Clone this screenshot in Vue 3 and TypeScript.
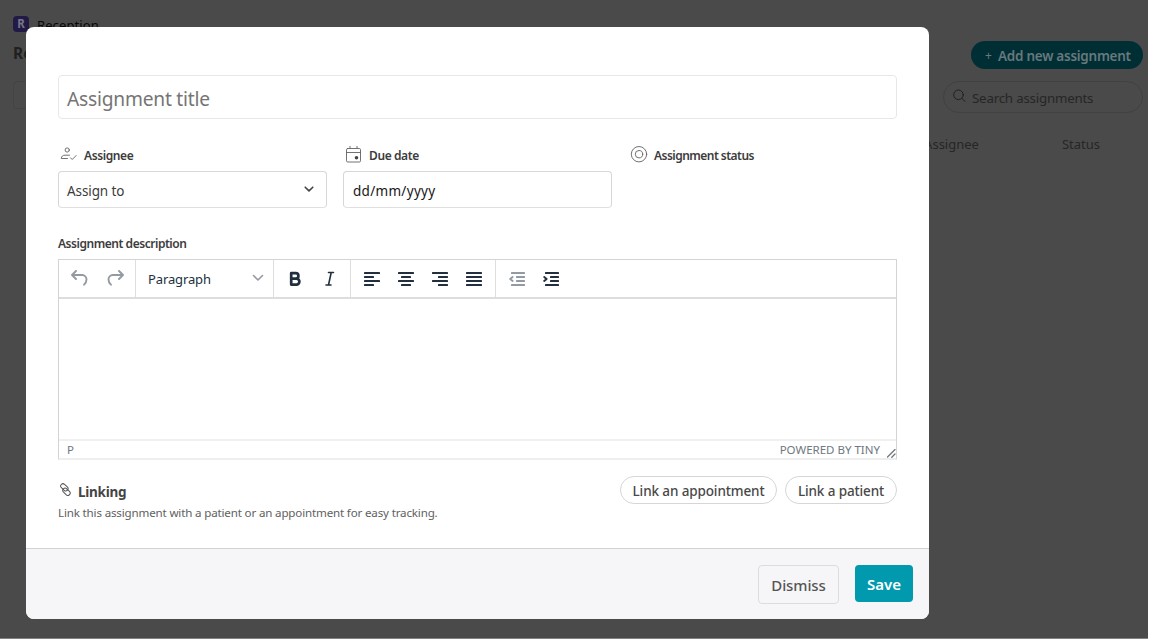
<script setup lang="ts">
interface Bar { x: number; w: number; y: number }

const rows = [1, 5, 9, 13]
const makeBars = (spec: [number, number][]): Bar[] =>
  spec.map(([x, w], i) => ({ x, w, y: rows[i] }))

const alignIcons: { name: string; bars: Bar[] }[] = [
  { name: 'Align left', bars: makeBars([[0, 16], [0, 10], [0, 16], [0, 10]]) },
  { name: 'Align center', bars: makeBars([[0, 16], [3, 10], [0, 16], [3, 10]]) },
  { name: 'Align right', bars: makeBars([[0, 16], [6, 10], [0, 16], [6, 10]]) },
  { name: 'Justify', bars: makeBars([[0, 16], [0, 16], [0, 16], [0, 16]]) },
]
const indentBars = makeBars([[2, 14], [7, 9], [7, 9], [2, 14]])
</script>

<template>
  <div class="screen">
    <div class="page">
      <div class="brand"><span class="logo">R</span><span class="t brand-name">Reception</span></div>
      <div class="heading-row">
        <span class="t heading">Reception</span>
        <span class="add"><span class="plus">+</span><span class="t add-text">Add new assignment</span></span>
      </div>
      <div class="filter-row">
        <span class="filter"></span>
        <span class="search">
          <svg width="14" height="14" viewBox="0 0 14 14"><circle cx="5.500" cy="5.800" r="4.800" /><path d="M9 9.400 12 12.500" /></svg>
          <span class="t search-text">Search assignments</span>
        </span>
      </div>
      <div class="columns"><span class="t col-a">Assignee</span><span class="t col-s">Status</span></div>
    </div>

    <div class="modal">
      <div class="body">
        <div class="title-input"><span class="t title-text">Assignment title</span></div>

        <div class="fields">
          <div class="field">
            <div class="label">
              <svg class="ic person" width="20" height="18" viewBox="0 0 20 18"><circle cx="9.200" cy="4" r="2.100" /><path d="M11.500 9.200H7C4.800 9.200 3.500 10.300 3.300 12.500h6.200M12.500 11.800l1.700 1.700 4-4" /></svg>
              <span class="t l-assignee">Assignee</span>
            </div>
            <div class="control">
              <span class="t c-assign">Assign to</span>
              <svg class="chev" width="10" height="7" viewBox="0 0 10 7"><path d="M1.200 1.200 5 4.900 8.800 1.200" /></svg>
            </div>
          </div>
          <div class="field">
            <div class="label">
              <svg class="ic" width="20" height="18" viewBox="0 0 20 18"><rect x="3.500" y="2.500" width="14" height="13.500" rx="1.200" /><path d="M3.500 6.500h14M7 .3v2.200M14 .3v2.200" /><circle cx="13.500" cy="11.700" r="1.800" class="dot" /></svg>
              <span class="t l-due">Due date</span>
            </div>
            <div class="control"><span class="t c-date">dd/mm/yyyy</span></div>
          </div>
          <div class="field">
            <div class="label">
              <svg class="ic" width="20" height="18" viewBox="0 0 20 18"><circle cx="11" cy="8.200" r="7.700" /><circle cx="11" cy="8.200" r="3.700" /></svg>
              <span class="t l-status">Assignment status</span>
            </div>
          </div>
        </div>

        <div class="desc"><span class="t l-desc">Assignment description</span></div>

        <div class="editor">
          <div class="toolbar">
            <div class="group history">
              <svg width="18" height="17" viewBox="0 0 18 17"><path d="M5 1 1 5 5 9M1.500 5h9.700a4.400 4.400 0 0 1 4.300 4.400c0 2.200-1 3.800-2.400 5.300" /></svg>
              <svg width="18" height="17" viewBox="0 0 18 17"><path d="M13 1l4 4-4 4M16.500 5H6.800a4.400 4.400 0 0 0-4.300 4.400c0 2.200 1 3.800 2.400 5.300" /></svg>
            </div>
            <div class="group format">
              <span class="t f-par">Paragraph</span>
              <svg width="12" height="8" viewBox="0 0 12 8"><path d="M1.500 1.500 6 6l4.500-4.500" /></svg>
            </div>
            <div class="group marks">
              <svg width="14" height="16" viewBox="0 0 14 16"><path d="M3.200 2.200h4.500a2.700 2.700 0 0 1 0 5.400H3.200zM3.200 7.600h5.200a3 3 0 0 1 0 6H3.200z" class="bold" /></svg>
              <svg width="12" height="16" viewBox="0 0 12 16"><path d="M4.500 1.500h5M2 14h5M7.200 1.500 4.500 14" class="italic" /></svg>
            </div>
            <div class="group aligns">
              <svg v-for="icon in alignIcons" :key="icon.name" width="16" height="16" viewBox="0 0 16 16" :aria-label="icon.name">
                <rect v-for="b in icon.bars" :key="b.y" :x="b.x" :y="b.y" :width="b.w" height="2" rx=".6" />
              </svg>
            </div>
            <div class="group indents">
              <svg class="muted" width="16" height="16" viewBox="0 0 16 16">
                <rect v-for="b in indentBars" :key="b.y" :x="b.x" :y="b.y" :width="b.w" height="2" rx=".6" />
                <path d="M3.600 6 1.200 8l2.400 2" />
              </svg>
              <svg width="16" height="16" viewBox="0 0 16 16">
                <rect v-for="b in indentBars" :key="b.y" :x="b.x" :y="b.y" :width="b.w" height="2" rx=".6" />
                <path d="M1.200 6 3.600 8l-2.400 2" />
              </svg>
            </div>
          </div>
          <div class="canvas"></div>
          <div class="status">
            <span class="t s-p">P</span>
            <span class="t s-tiny">POWERED BY TINY</span>
            <svg width="9" height="9" viewBox="0 0 9 9"><path d="M.5 8 8 .5M4.800 8.200 8 5" /></svg>
          </div>
        </div>

        <div class="linking">
          <div class="link-info">
            <div class="link-head">
              <svg width="13" height="13" viewBox="0 0 13 13"><g transform="rotate(43 6.500 6.500)"><rect x="0" y="3.400" width="8.400" height="4.600" rx="2.300" /><rect x="4.600" y="5.200" width="8.400" height="4.600" rx="2.300" /></g></svg>
              <span class="t k-head">Linking</span>
            </div>
            <div class="k-line"><span class="t k-sub">Link this assignment with a patient or an appointment for easy tracking.</span></div>
          </div>
          <div class="pills">
            <span class="pill first"><span class="t p-app">Link an appointment</span></span>
            <span class="pill second"><span class="t p-pat">Link a patient</span></span>
          </div>
        </div>
      </div>

      <div class="footer">
        <span class="btn dismiss"><span class="t b-dis">Dismiss</span></span>
        <span class="btn save"><span class="t b-save">Save</span></span>
      </div>
    </div>
  </div>
</template>

<style>
html, body { margin: 0; background: #fff; }
</style>

<style scoped>
* { box-sizing: border-box; }
.screen { position: relative; width: 1149px; height: 639px; overflow: hidden; font-family: "Noto Sans", "Open Sans", sans-serif; color: #3c3c3c; }
.page { width: 1148px; height: 639px; background: #4a4a4a; border-bottom: 1px solid #858181; padding: 14px 5px 0 13px; color: #262626; }
.t { white-space: nowrap; display: inline-block; }
svg { flex: none; display: block; fill: none; stroke-linecap: round; stroke-linejoin: round; }

.brand { display: flex; align-items: center; height: 20px; gap: 8px; }
.logo { width: 16px; height: 16px; border-radius: 4px; background: #211a45; color: #77758a; font-size: 11.500px; font-weight: 700; line-height: 16px; text-align: center; }
.brand-name { font-size: 13px; color: #080808; line-height: 20px; padding-top: 1px; letter-spacing: .1px; }
.heading-row { display: flex; justify-content: space-between; align-items: center; height: 28px; margin-top: 7px; }
.heading { font-size: 15.500px; font-weight: 700; line-height: 20px; margin-top: -5px; color: #202020; }
.add { width: 172px; height: 28px; border-radius: 14px; background: #002e35; color: #66797c; display: flex; align-items: center; padding: 2px 0 0 14px; }
.plus { font-size: 12px; width: 13px; line-height: 20px; }
.add-text { font-size: 13.500px; font-weight: 600; line-height: 20px; letter-spacing: -.26px; }
.filter-row { display: flex; justify-content: space-between; margin-top: 12px; height: 32px; }
.filter { width: 60px; height: 28px; border: 1px solid #444; border-radius: 4px; }
.search { width: 200px; height: 32px; border: 1px solid #414141; border-radius: 16px; display: flex; align-items: center; padding-left: 9px; gap: 5px; }
.search svg { stroke: #202020; margin-top: -3px; }
.search-text { font-size: 13.300px; line-height: 20px; padding-top: 2px; letter-spacing: -.2px; }
.columns { display: flex; justify-content: flex-end; margin-top: 21px; line-height: 20px; font-size: 13px; padding-right: 43px; gap: 83px; }

.modal { position: absolute; left: 26px; top: 27px; width: 903px; height: 592px; border-radius: 8px; background: #fff; overflow: hidden; display: flex; flex-direction: column; }
.body { height: 521px; padding: 48px 32px 0; }
.title-input { height: 44px; border: 1px solid #e7e7e7; border-radius: 4px; padding: 2px 0 0 8px; display: flex; align-items: center; }
.title-text { font-size: 19.200px; color: #757575; letter-spacing: -.22px; }
.fields { display: grid; grid-template-columns: 269px 269px 269px; gap: 16px; margin-top: 26px; height: 63px; }
.label { display: flex; align-items: center; height: 20px; gap: 6px; font-size: 12px; font-weight: 600; margin-bottom: 6px; letter-spacing: -.48px; }
.l-assignee, .l-due { letter-spacing: -.4px; }
.l-status { letter-spacing: -.53px; }
.ic { stroke: #626262; stroke-width: .9; margin-top: 0; }
.dot { fill: #444; stroke: none; }
.control { height: 37px; border: 1px solid #d7d7d7; border-bottom-color: #e0e0e0; border-radius: 4px; display: flex; align-items: center; justify-content: space-between; padding: 2px 12px 0 8px; font-size: 13.500px; }
.c-assign { letter-spacing: -.1px; }
.chev { stroke: #444; stroke-width: 1.600; margin-top: -3px; }
.c-date { color: #161616; padding-left: 1px; letter-spacing: .3px; }
.desc { height: 20px; margin-top: 26px; font-size: 12px; font-weight: 600; line-height: 20px; letter-spacing: -.46px; }

.editor { margin-top: 5px; height: 201px; border: 1px solid #d4d4d4; border-bottom: 2px solid #eee; display: flex; flex-direction: column; }
.toolbar { display: flex; height: 39px; border-bottom: 2px solid #ddd; }
.group { display: flex; align-items: center; border-right: 1px solid #dedede; }
.history { width: 77px; padding-left: 12px; gap: 17px; }
.history svg { stroke: #949aa1; stroke-width: 1.900; }
.format { width: 138px; padding: 1px 9px 0 12px; justify-content: space-between; color: #222f3e; font-size: 13px; letter-spacing: -.12px; }
.format svg { stroke: #949aa1; stroke-width: 1.600; margin-top: -3px; }
.marks { width: 77px; padding-left: 14px; gap: 22px; }
.bold { stroke: #222f3e; stroke-width: 2.700; }
.italic { stroke: #222f3e; stroke-width: 1.600; }
.aligns { width: 145px; padding-left: 13px; gap: 18px; }
.aligns svg, .indents svg { fill: #222f3e; }
.indents { padding-left: 13px; gap: 18px; border: 0; }
.indents path { stroke: #222f3e; stroke-width: 1.900; fill: none; }
.indents svg.muted { fill: #949aa1; }
.indents .muted path { stroke: #949aa1; }
.canvas { flex: 1; }
.status { height: 19px; border-top: 2px solid #f0f0f0; display: flex; align-items: center; color: #6f7782; font-size: 11.500px; line-height: 16px; padding-top: 1px; }
.s-p { margin-left: 8px; }
.s-tiny { margin-left: auto; margin-right: 7px; }
.status svg { stroke: #70767d; stroke-width: 1.300; margin-top: 7px; }

.linking { display: flex; justify-content: space-between; margin-top: 16px; }
.link-head { display: flex; align-items: center; height: 28px; gap: 6px; padding-left: 1px; padding-top: 3px; }
.link-head svg { stroke: #555; margin-top: -4px; }
.k-head { font-size: 13.500px; font-weight: 700; color: #444; line-height: 20px; letter-spacing: -.25px; }
.k-line { height: 18px; line-height: 18px; font-size: 11.600px; color: #616161; letter-spacing: -.17px; }
.pills { display: flex; gap: 8px; }
.pill { height: 28px; border: 1px solid #d6d6d6; border-radius: 14px; display: flex; align-items: center; justify-content: center; font-size: 13.500px; font-weight: 500; color: #484848; padding-top: 2px; letter-spacing: -.12px; }
.first { width: 157px; }
.second { width: 112px; }

.footer { flex: 1; border-top: 1px solid #d2d2d4; background: #f6f6f9; display: flex; justify-content: flex-end; padding: 16px 16px 0; gap: 16px; }
.btn { display: flex; align-items: center; justify-content: center; border-radius: 4px; font-size: 15px; font-weight: 500; }
.dismiss { width: 81px; height: 39px; border: 1px solid #dcdcdf; color: #555; letter-spacing: -.1px; }
.save { width: 58px; height: 37px; background: #0099ae; color: #fff; font-weight: 600; padding-top: 1px; }
</style>
